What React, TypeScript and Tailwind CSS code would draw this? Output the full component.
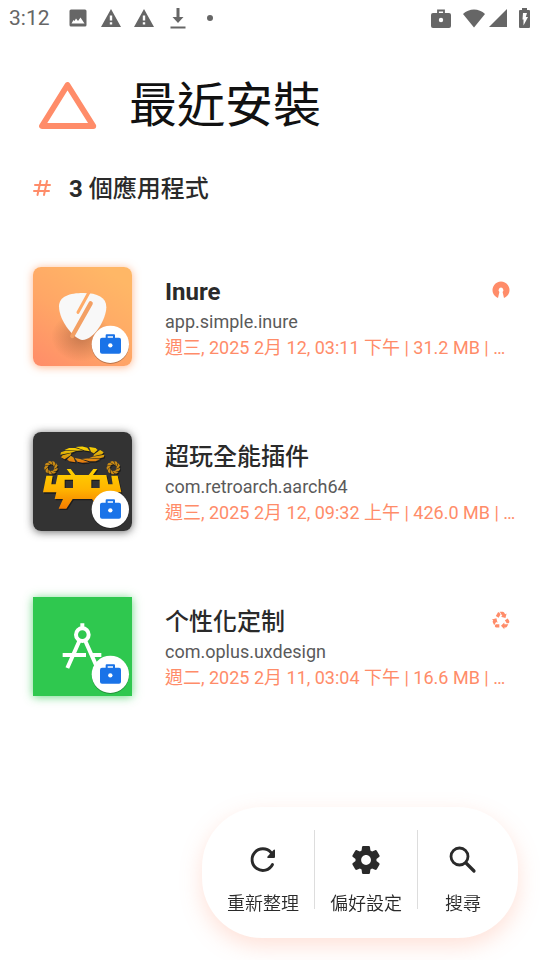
import type { ReactNode } from "react";

const orange = "#ff8c69";

function Triangle({ className }: { className: string }) {
  return (
    <svg viewBox="0 0 58 48" className={className} fill="none" stroke={orange} strokeWidth="5.8" strokeLinejoin="round" aria-hidden="true">
      <path d="M29 3 3.500 44H54.800Z" />
    </svg>
  );
}

function StatusBar() {
  return (
    <div className="flex h-9 items-center justify-between pr-2.5 pl-[9px] text-[#666666]">
      <div className="flex items-center">
        <span className="w-[60px] text-[21px] leading-6 font-normal">3:12</span>
        <svg viewBox="0 0 18 18" className="h-[18px] w-[18px]" fill="currentColor" aria-hidden="true">
          <path fillRule="evenodd" d="M2 .5H16A1.500 1.500 0 0 1 17.500 2V16A1.500 1.500 0 0 1 16 17.500H2A1.500 1.500 0 0 1 .500 16V2A1.500 1.500 0 0 1 2 .500ZM2.500 14.500H15.500L11.500 8.500 9 12 7 9.500 5.500 12 4.500 11Z" />
        </svg>
        {[0, 1].map((n) => (
          <svg key={n} viewBox="0 0 20 18" className={n === 0 ? "ml-[14px] h-[18px] w-5" : "ml-[13px] h-[18px] w-5"} fill="currentColor" aria-hidden="true">
            <path fillRule="evenodd" d="M10 0 20 18H0ZM8.800 6.500V11.500H11.200V6.500ZM8.800 13.200V15.600H11.200V13.200Z" />
          </svg>
        ))}
        <svg viewBox="0 0 16 21" className="ml-4 h-[21px] w-4" fill="currentColor" aria-hidden="true">
          <path d="M6.500 0H9.500V9H13.500L8 15 2.500 9H6.500ZM.500 18.500H15.500V20.500H.500Z" />
        </svg>
        <span className="ml-[21px] h-1.5 w-1.5 rounded-full bg-[#666666]" />
      </div>
      <div className="flex items-center">
        <svg viewBox="0 0 20 19" className="h-[19px] w-5" aria-hidden="true">
          <path d="M7 5V1.500H13V5" fill="none" stroke="currentColor" strokeWidth="1.800" />
          <rect y="4" width="20" height="15" rx="2" fill="currentColor" />
          <circle cx="10" cy="11" r="2.200" fill="#fff" />
        </svg>
        <svg viewBox="0 0 22 19" className="ml-3 h-[19px] w-[22px]" fill="currentColor" aria-hidden="true">
          <path d="M0 5C6-1 16-1 22 5L11 18.500Z" />
        </svg>
        <svg viewBox="0 0 18 18" className="ml-1 h-[18px] w-[18px]" fill="currentColor" aria-hidden="true">
          <path d="M18 0V18H0Z" />
        </svg>
        <svg viewBox="0 0 11 20" className="ml-3 h-5 w-[11px]" aria-hidden="true">
          <path d="M3 0H8V2H10Q11 2 11 3V19Q11 20 10 20H1Q0 20 0 19V3Q0 2 1 2H3Z" fill="currentColor" />
          <path d="M4 5H8L6.800 9H9L4.500 17.500V11.500H3.500Z" fill="#fff" />
        </svg>
      </div>
    </div>
  );
}

function WorkBadge() {
  return (
    <>
      <circle cx="271" cy="271" r="56" fill="#000" opacity=".28" />
      <circle cx="271" cy="268" r="56" fill="#fff" />
      <path d="M260 250V241H282V250" fill="none" stroke="#1a73e8" strokeWidth="6" strokeLinejoin="round" />
      <rect x="240" y="248" width="63" height="48" rx="6" fill="#1a73e8" />
      <circle cx="271" cy="271" r="6.500" fill="#fff" />
    </>
  );
}

function InureIcon() {
  return (
    <svg viewBox="39 36 297 297" className="h-[99px] w-[99px] shrink-0 rounded-lg shadow-[0_1px_9px_rgba(255,150,90,0.7)]" aria-hidden="true">
      <defs>
        <linearGradient id="inure-bg" x1="0" y1="1" x2=".7" y2="0">
          <stop offset="0" stopColor="#ff8c69" />
          <stop offset=".5" stopColor="#ffa666" />
          <stop offset="1" stopColor="#ffb766" />
        </linearGradient>
        <radialGradient id="inure-shade">
          <stop offset="0" stopColor="#9b583a" stopOpacity=".55" />
          <stop offset="1" stopColor="#9b583a" stopOpacity="0" />
        </radialGradient>
      </defs>
      <rect x="39" y="36" width="297" height="297" fill="url(#inure-bg)" />
      <ellipse cx="184" cy="245" rx="90" ry="75" fill="url(#inure-shade)" />
      <path d="M117 154C117 124 149 114 190 114C233 114 259 127 259 157C259 192 222 255 187 255C165 254 117 200 117 154Z" fill="#f8f8f8" />
      <path d="M208 110 174 172" stroke="#ffab68" strokeWidth="9" strokeLinecap="round" />
      <path d="M212 145 157 243" stroke="#f3a064" strokeWidth="13" strokeLinecap="round" />
      <WorkBadge />
    </svg>
  );
}

/* Ring of slanted blades around an ellipse. */
function Swirl({ cx, cy, rx, ry, inner, count }: { cx: number; cy: number; rx: number; ry: number; inner: number; count: number }) {
  const at = (deg: number, k: number) => {
    const a = (deg * Math.PI) / 180;
    return `${(cx + rx * k * Math.cos(a)).toFixed(1)} ${(cy + ry * k * Math.sin(a)).toFixed(1)}`;
  };
  const step = 360 / count;
  return (
    <>
      {Array.from({ length: count }, (_, i) => {
        const d = i * step;
        return <path key={i} d={`M${at(d, 1)}L${at(d + step * 0.5, 1.02)}L${at(d + step * 0.9, 0.9)}L${at(d + step * 1.6, inner)}L${at(d + step * 0.8, inner)}Z`} />;
      })}
    </>
  );
}

function RetroArchIcon() {
  return (
    <svg viewBox="39 36 297 297" className="h-[99px] w-[99px] shrink-0 rounded-lg shadow-[0_1px_9px_rgba(40,40,40,0.7)]" aria-hidden="true">
      <defs>
        <linearGradient id="retro-gold" gradientUnits="userSpaceOnUse" x1="0" y1="150" x2="0" y2="266">
          <stop offset="0" stopColor="#ffd000" />
          <stop offset=".5" stopColor="#ffb400" />
          <stop offset="1" stopColor="#f47c00" />
        </linearGradient>
        <linearGradient id="retro-halo" gradientUnits="userSpaceOnUse" x1="0" y1="80" x2="0" y2="128">
          <stop offset="0" stopColor="#ffd800" />
          <stop offset=".5" stopColor="#d9a70c" />
          <stop offset="1" stopColor="#e87811" />
        </linearGradient>
      </defs>
      <rect x="39" y="36" width="297" height="297" fill="#333" />
      {[false, true].map((lit) => (
        <g key={String(lit)} transform={lit ? undefined : "translate(3 4)"} fill={lit ? "url(#retro-gold)" : "#1c1c1c"}>
          <path fillRule="evenodd" d="M79 167H98L94 193H107L113 165H153L140 147H152L166 165H206L220 147H232L219 165H259L265 193H278L274 167H293L304 217H265L269 237H245L258 266H237L216 237H158L139 266H116L129 237H104L109 217H69ZM134 179V204H159V179ZM214 179V204H239V179Z" />
          <g fill={lit ? "url(#retro-halo)" : "#1c1c1c"}>
            <Swirl cx={187} cy={104} rx={66} ry={24} inner={0.54} count={10} />
          </g>
          <g fill={lit ? "#c98a14" : "#1c1c1c"}>
            <Swirl cx={93} cy={143} rx={20} ry={20} inner={0.5} count={9} />
            <Swirl cx={280} cy={143} rx={20} ry={20} inner={0.5} count={9} />
          </g>
        </g>
      ))}
      <WorkBadge />
    </svg>
  );
}

function DesignIcon() {
  return (
    <svg viewBox="39 36 297 297" className="h-[99px] w-[99px] shrink-0 shadow-[0_1px_9px_rgba(46,200,80,0.7)]" aria-hidden="true">
      <rect x="39" y="36" width="297" height="297" fill="#2fc84f" />
      <g fill="none" stroke="#fff" strokeWidth="12">
        <circle cx="187" cy="149" r="19" />
        <path d="M187 115V131M178 168 142 249M196 168 232 249M128 210H198M215 210H244" />
      </g>
      <WorkBadge />
    </svg>
  );
}

function OpenSourceMark() {
  return (
    <svg viewBox="0 0 18 18" className="h-[18px] w-[18px]" aria-label="Open source" role="img">
      <path fill={orange} d="M6 17A8.500 8.500 0 1 1 12 17L10.600 11A2.300 2.300 0 1 0 7.400 11Z" />
      <circle cx="9" cy="8.500" r="1.900" fill="#fff" />
      <path d="M9 9V17" stroke="#fff" strokeWidth="1.800" />
    </svg>
  );
}

function RecycleMark() {
  return (
    <svg viewBox="0 0 24 24" className="h-5 w-5" fill={orange} aria-label="System app" role="img">
      <path d="M5.770 7.150 7.200 4.780l1.030-1.710c.39-.65 1.330-.65 1.720 0l1.480 2.460-1.230 2.060-1 1.620-3.430-2.060zm15.950 5.820-1.600-2.660-3.460 2L18.870 16H20c.760 0 1.450-.430 1.790-1.110.14-.280.210-.580.210-.890 0-.360-.100-.710-.280-1.030zM16 21h1.500c.760 0 1.450-.430 1.790-1.110L20.740 17H16v-2l-4 4 4 4v-2zm-6-4H5.700l-.840 1.410c-.300.500-.320 1.120-.060 1.650.280.570.870.940 1.520.940H10v-4zm-3.880-2.650 1.730 1.040L6.480 9.900 1 11.270l1.700 1.020-.410.690c-.350.590-.380 1.310-.070 1.920l1.630 3.260 2.270-3.810zm10.900-9.210-1.300-2.170C15.350 2.370 14.700 2 14 2h-3.530l3.120 5.200-1.720 1.030 5.490 1.370 1.370-5.490-1.710 1.030z" />
    </svg>
  );
}

type App = { name: string; id: string; info: string; latin?: boolean; icon: ReactNode; mark?: ReactNode };

const apps: App[] = [
  { name: "Inure", id: "app.simple.inure", info: "週三, 2025 2月 12, 03:11 下午 | 31.2 MB | …", latin: true, icon: <InureIcon />, mark: <OpenSourceMark /> },
  { name: "超玩全能插件", id: "com.retroarch.aarch64", info: "週三, 2025 2月 12, 09:32 上午 | 426.0 MB | …", icon: <RetroArchIcon /> },
  { name: "个性化定制", id: "com.oplus.uxdesign", info: "週二, 2025 2月 11, 03:04 下午 | 16.6 MB | …", icon: <DesignIcon />, mark: <RecycleMark /> },
];

function AppRow({ name, id, info, latin, icon, mark }: App) {
  return (
    <li className="flex items-center gap-[33px] py-[33px] pr-5 pl-[33px]">
      {icon}
      <div className="min-w-0 flex-1 pt-0.5">
        <div className="flex items-center justify-between">
          <h2 className={latin ? "text-2xl leading-9 font-bold text-[#2a2a2a]" : "text-2xl leading-9 font-medium text-[#2a2a2a]"}>{name}</h2>
          <span className="mr-[9px] flex w-5 justify-center pb-1">{mark}</span>
        </div>
        <p className="truncate text-lg leading-6 text-[#5a5a5a]">{id}</p>
        <p className="truncate text-lg leading-[27px] text-[#ff8c69]">{info}</p>
      </div>
    </li>
  );
}

function MenuButton({ label, children }: { label: string; children: ReactNode }) {
  return (
    <button type="button" className="flex min-w-[90px] flex-col items-center gap-4 px-[15px] pt-3 text-[#2a2a2a]">
      <svg viewBox="0 0 36 36" className="h-9 w-9" aria-hidden="true">
        {children}
      </svg>
      <span className="text-lg leading-5 font-[350] whitespace-nowrap">{label}</span>
    </button>
  );
}

export default function App() {
  return (
    <div className="min-h-screen bg-white font-['Roboto','Noto_Sans_CJK_TC',sans-serif]">
      <StatusBar />
      <main>
        <header className="pt-[34px]">
          <div className="flex items-center pl-[38px]">
            <Triangle className="h-12 w-[59px]" />
            <h1 className="ml-8 text-5xl leading-[72px] font-normal text-[#111111]">最近安裝</h1>
          </div>
          <div className="mt-[29px] flex items-center pl-[33px]">
            <svg viewBox="0 0 18 18" className="h-[18px] w-[18px]" fill="none" stroke={orange} strokeWidth="2" strokeLinecap="round" aria-hidden="true">
              <path d="M7.500 1 4.500 15M14 1 11 15M2 5H17M1 11H16" />
            </svg>
            <p className="ml-[18px] text-2xl leading-9 font-medium text-[#2a2a2a]">
              <span className="font-bold">3</span> 個應用程式
            </p>
          </div>
        </header>
        <ul className="mt-[27px]">
          {apps.map((app) => (
            <AppRow key={app.id} {...app} />
          ))}
        </ul>
      </main>
      <nav className="fixed right-[22px] bottom-[22px] flex h-[131px] items-start rounded-[60px] bg-white px-2.5 pt-[23px] shadow-[0_8px_22px_rgba(255,140,105,0.26)]">
        <MenuButton label="重新整理">
          <path d="M27.500 22.500A10.800 10.800 0 1 1 26 10.500" fill="none" stroke="currentColor" strokeWidth="2.900" strokeLinecap="round" />
          <path d="M30 8.500V15Q30 16 29 16H23Q21.500 15.500 22.500 14.500L28.500 8Q30 7 30 8.500Z" fill="currentColor" />
        </MenuButton>
        <span className="h-[79px] w-px bg-[#dddddd]" />
        <MenuButton label="偏好設定">
          <path transform="translate(1.2 1.2) scale(1.4)" fill="currentColor" d="M19.500 12c0-.230-.010-.450-.030-.680l1.860-1.410c.400-.300.510-.860.260-1.300l-1.870-3.230c-.250-.440-.790-.620-1.250-.420l-2.150.910c-.370-.260-.760-.490-1.170-.680l-.290-2.310c-.060-.500-.490-.880-.990-.880h-3.730c-.510 0-.940.380-1 .880l-.290 2.310c-.410.190-.800.420-1.170.680l-2.150-.910c-.460-.200-1-.020-1.250.420L2.410 8.620c-.250.440-.140.990.260 1.300l1.860 1.410C4.510 11.550 4.500 11.770 4.500 12s.010.450.030.680l-1.860 1.410c-.400.300-.510.860-.260 1.300l1.870 3.230c.250.440.790.620 1.250.420l2.150-.910c.370.260.760.490 1.170.680l.290 2.310c.060.500.490.880.990.880h3.730c.500 0 .930-.380.990-.880l.290-2.310c.410-.190.800-.420 1.170-.680l2.150.910c.460.200 1 .020 1.250-.420l1.870-3.230c.250-.440.140-.990-.260-1.300l-1.860-1.410C19.490 12.450 19.500 12.230 19.500 12zM12.040 15.500c-1.930 0-3.500-1.570-3.500-3.500s1.570-3.500 3.500-3.500 3.500 1.570 3.500 3.500S13.970 15.500 12.040 15.500z" />
        </MenuButton>
        <span className="h-[79px] w-px bg-[#dddddd]" />
        <MenuButton label="搜尋">
          <circle cx="14.500" cy="14.500" r="8.500" fill="none" stroke="currentColor" strokeWidth="2.800" />
          <path d="M21 21 29 29" fill="none" stroke="currentColor" strokeWidth="3.200" strokeLinecap="round" />
        </MenuButton>
      </nav>
    </div>
  );
}
